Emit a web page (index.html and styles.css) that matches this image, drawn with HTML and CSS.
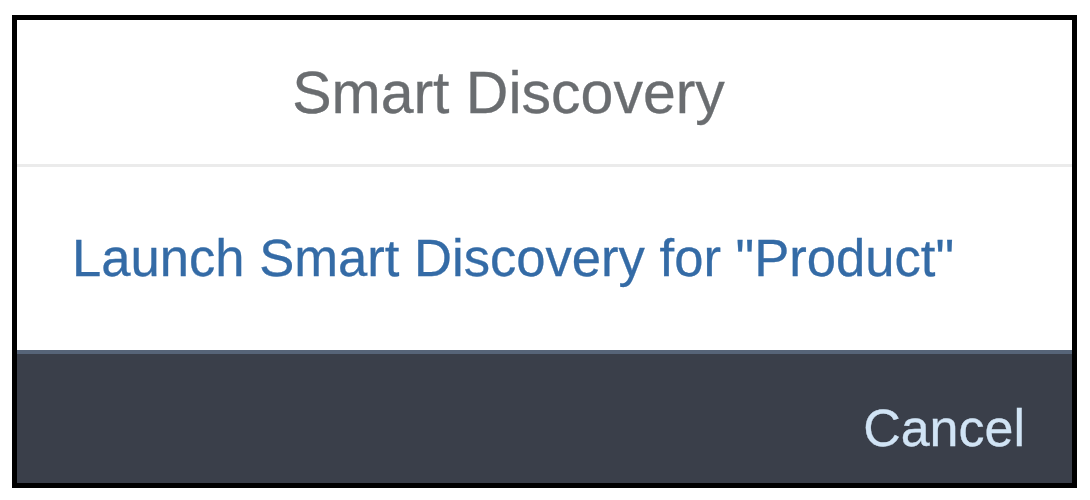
FILE: index.html
```html
<!DOCTYPE html>
<html lang="en">
<head>
    <meta charset="UTF-8">
    <title>Smart Discovery</title>
    <link rel="stylesheet" href="styles.css">
</head>
<body>
    <div class="dialog">
        <div class="dialog-header">Smart Discovery</div>
        <div class="dialog-content">
            <a class="launch-link" href="#">Launch Smart Discovery for "Product"</a>
        </div>
        <div class="dialog-footer">
            <button class="cancel-btn">Cancel</button>
        </div>
    </div>
</body>
</html>
```

FILE: styles.css
```css
body {
    margin: 0;
    background-color: #fff;
    font-family: 'Liberation Sans', Arial, sans-serif;
}
.dialog {
    box-sizing: border-box;
    width: 1065px;
    height: 473px;
    margin: 15px 0 0 12px;
    border: 5px solid #000;
    background-color: #fff;
    display: flex;
    flex-direction: column;
}
.dialog-header {
    height: 147px;
    box-sizing: border-box;
    padding: 39px 72px 0 0;
    font-size: 59px;
    line-height: 68px;
    color: #6a6d70;
    text-align: center;
    border-bottom: 3px solid #ebebeb;
    -webkit-text-stroke: 0.3px #6a6d70;
}
.dialog-content {
    height: 183px;
    box-sizing: border-box;
    padding: 61px 0 0 55px;
}
.launch-link {
    font-size: 52.6px;
    line-height: 60px;
    color: #346ba6;
    text-decoration: none;
    -webkit-text-stroke: 0.3px #346ba6;
}
.dialog-footer {
    flex: 1;
    background-color: #3a3f4a;
    border-top: 4px solid #566478;
    display: flex;
    justify-content: flex-end;
    padding: 44px 47px 0 0;
}
.cancel-btn {
    align-self: flex-start;
    padding: 0;
    border: none;
    background: none;
    font-family: 'Liberation Sans', Arial, sans-serif;
    font-size: 52px;
    line-height: 60px;
    color: #d1e4f5;
    -webkit-text-stroke: 0.3px #d1e4f5;
    cursor: pointer;
}
```
